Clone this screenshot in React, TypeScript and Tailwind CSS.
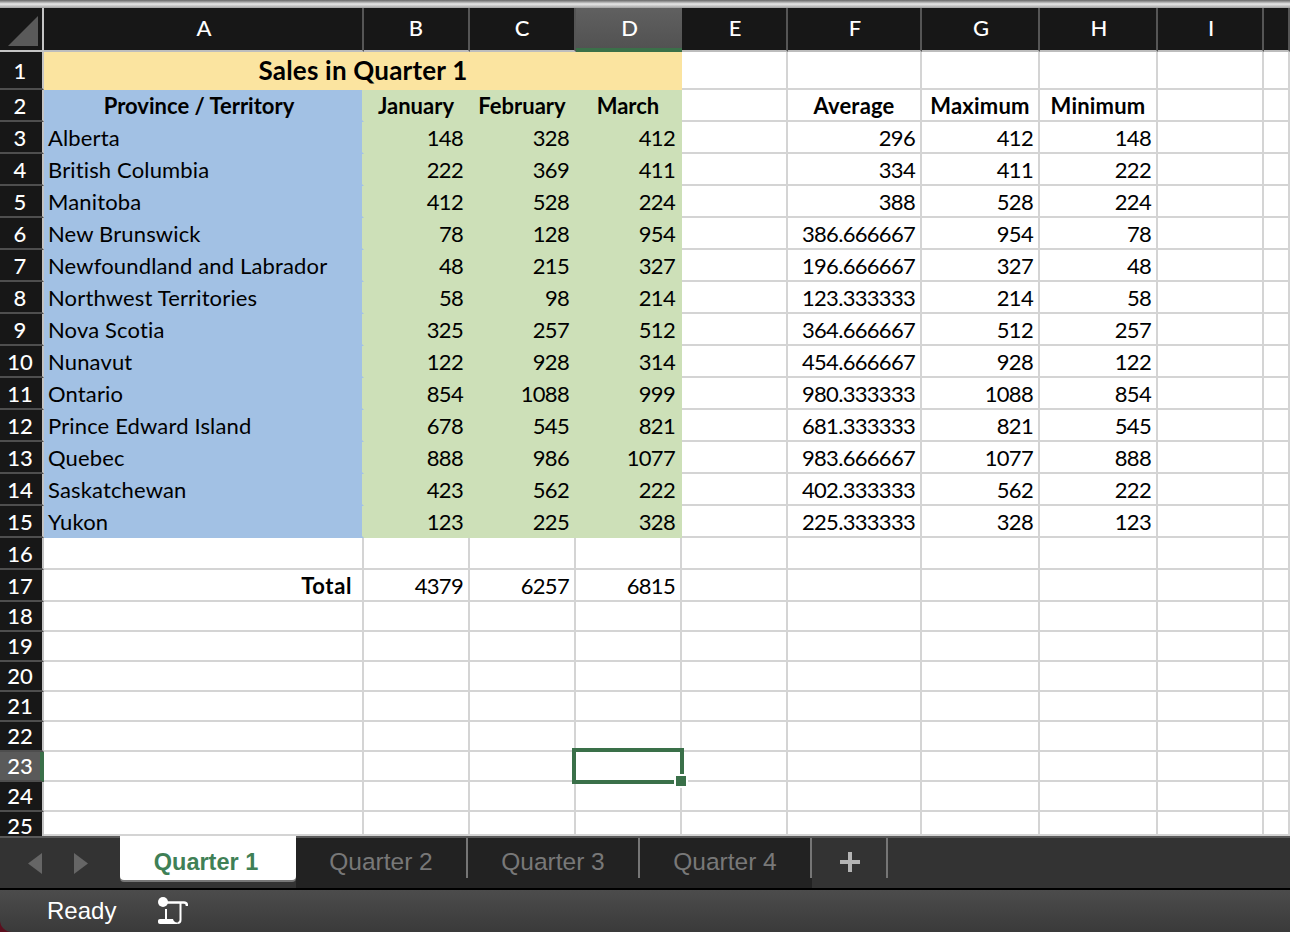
import { Fragment } from "react";

const colHeaders = ["A", "B", "C", "D", "E", "F", "G", "H", "I", ""];

const provinces: [string, number, number, number, string, number, number][] = [
  ["Alberta", 148, 328, 412, "296", 412, 148],
  ["British Columbia", 222, 369, 411, "334", 411, 222],
  ["Manitoba", 412, 528, 224, "388", 528, 224],
  ["New Brunswick", 78, 128, 954, "386.666667", 954, 78],
  ["Newfoundland and Labrador", 48, 215, 327, "196.666667", 327, 48],
  ["Northwest Territories", 58, 98, 214, "123.333333", 214, 58],
  ["Nova Scotia", 325, 257, 512, "364.666667", 512, 257],
  ["Nunavut", 122, 928, 314, "454.666667", 928, 122],
  ["Ontario", 854, 1088, 999, "980.333333", 1088, 854],
  ["Prince Edward Island", 678, 545, 821, "681.333333", 821, 545],
  ["Quebec", 888, 986, 1077, "983.666667", 1077, 888],
  ["Saskatchewan", 423, 562, 222, "402.333333", 562, 222],
  ["Yukon", 123, 225, 328, "225.333333", 328, 123],
];

const base = "flex items-end border-r-2 border-b-2 px-1 text-black";
const plain = `${base} border-[#d4d4d4]`;
const blue = `${base} bg-[#a2c1e4] border-b-[#a2c1e4] border-r-[#cde0b8]`;
const green = `${base} bg-[#cde0b8] border-[#cde0b8]`;

function RowHead({ n }: { n: number }) {
  const active = n === 23;
  return (
    <div
      className={`flex justify-center pr-[2px] font-medium text-white ${
        active ? "border-r-4 border-r-[#3a7049] bg-[#5a5a5a] pl-[2px]" : "border-r-2 border-r-[#c4c4c4] bg-[#171717]"
      } ${n === 25 ? "items-start pt-[4px] text-[22px] leading-[20px]" : "items-end border-b-2 border-b-[#4e4e4e] text-[22px] leading-[28px]"} ${
        n === 1 ? "pb-[3px]" : ""
      }`}
    >
      {n}
    </div>
  );
}

function Empty({ n = 9 }: { n?: number }) {
  return (
    <>
      {Array.from({ length: n }).map((_, i) => (
        <div key={i} className={plain} />
      ))}
    </>
  );
}

function Num({ v, variant = plain }: { v: string | number; variant?: string }) {
  return <div className={`${variant} justify-end pr-[5px] tracking-[-0.7px]`}>{v}</div>;
}

function MacroIcon() {
  return (
    <svg width="30" height="28" viewBox="0 0 30 28" fill="none" className="shrink-0">
      <circle cx="5" cy="5" r="5" fill="#fff" />
      <path d="M9 5.5H26C28 5.5 29 7 29 9" stroke="#fff" strokeWidth="2.5" />
      <path d="M22.5 5.5V23C22.5 25 21.5 26 19.5 26" stroke="#fff" strokeWidth="2" />
      <path d="M8 12V22" stroke="#fff" strokeWidth="2" />
      <path d="M0 24C0 22.8 .8 22 2 22H15C15.5 24 17 25.5 19 25.5L20 27H2C.8 27 0 26.2 0 25Z" fill="#fff" />
    </svg>
  );
}

function Tab({ label }: { label: string }) {
  return (
    <div className="flex h-[40px] w-[172px] items-center justify-center border-r-2 border-[#767676] pt-[8px] text-[#787878]">
      {label}
    </div>
  );
}

export default function App() {
  return (
    <div className="flex h-screen w-full flex-col overflow-hidden bg-[#5b0f1e] font-['Lato','Liberation_Sans',sans-serif] text-[22px] leading-[28px]">
      <div className="h-2 shrink-0 bg-gradient-to-b from-[#666666] via-[#e8e8e8] to-[#a0a0a0]" />

      <div className="grid h-[828px] shrink-0 grid-cols-[44px_320px_106px_106px_106px_106px_134px_118px_118px_106px_26px] grid-rows-[44px_38px_repeat(16,32px)_repeat(7,30px)_24px] overflow-hidden bg-white">
        {/* column headers */}
        <div className="relative border-r-2 border-b-2 border-[#c4c4c4] bg-[#171717]">
          <svg width="30" height="30" viewBox="0 0 30 30" className="absolute top-2 left-2">
            <path d="M0 30L30 0V30Z" fill="#5a5a5a" />
          </svg>
        </div>
        {colHeaders.map((c) => (
          <div
            key={c || "J"}
            className={`flex items-center justify-center text-[22px] font-medium text-white ${
              c === "D"
                ? "border-b-4 border-b-[#3a7049] bg-gradient-to-b from-[#606060] to-[#525252] pl-[1px]"
                : "border-r-2 border-b-2 border-r-[#555] border-b-[#bdbdbd] bg-[#171717] pb-[2px]"
            } ${c === "B" || c === "C" || c === "D" ? "" : "pl-[2px]"}`}
          >
            {c}
          </div>
        ))}

        {/* row 1 */}
        <RowHead n={1} />
        <div className="col-span-4 flex items-start justify-center bg-[#fbe4a0] pt-[4px] text-[26px] font-bold tracking-[0.2px] text-black">
          Sales in Quarter 1
        </div>
        <Empty n={6} />

        {/* row 2 */}
        <RowHead n={2} />
        <div className={`${blue} justify-center pr-[12px] font-bold`}>Province / Territory</div>
        {["January", "February", "March"].map((m) => (
          <div key={m} className={`${green} justify-center font-bold`}>
            {m}
          </div>
        ))}
        <div className={plain} />
        {["Average", "Maximum", "Minimum"].map((m) => (
          <div key={m} className={`${plain} justify-center font-bold tracking-[0.2px]`}>
            {m}
          </div>
        ))}
        <Empty n={2} />

        {/* data rows */}
        {provinces.map((p, i) => (
          <Fragment key={p[0]}>
            <RowHead n={i + 3} />
            <div className={`${blue} tracking-[0.15px]`}>{p[0]}</div>
            <Num v={p[1]} variant={green} />
            <Num v={p[2]} variant={green} />
            <Num v={p[3]} variant={green} />
            <div className={plain} />
            <Num v={p[4]} />
            <Num v={p[5]} />
            <Num v={p[6]} />
            <Empty n={2} />
          </Fragment>
        ))}

        <RowHead n={16} />
        <Empty n={10} />

        <RowHead n={17} />
        <div className={`${plain} justify-end pr-[10px] font-bold tracking-[0.6px]`}>Total</div>
        <Num v={4379} />
        <Num v={6257} />
        <Num v={6815} />
        <Empty n={6} />

        {[18, 19, 20, 21, 22, 23, 24, 25].map((n) => (
          <Fragment key={n}>
            <RowHead n={n} />
            <div className={plain} />
            <div className={plain} />
            <div className={plain} />
            <div className={`${plain} relative`}>
              {n === 23 && (
                <div className="absolute -top-[4px] -left-[4px] z-10 h-[36px] w-[112px] border-4 border-[#3a7049]">
                  <div className="absolute -right-[8px] -bottom-[8px] h-[14px] w-[14px] border-2 border-white bg-[#3a7049]" />
                </div>
              )}
            </div>
            <Empty n={6} />
          </Fragment>
        ))}
      </div>

      {/* sheet tabs */}
      <div className="flex h-[52px] shrink-0 items-start border-t-2 border-[#5a5a5a] bg-[#333333] font-['Liberation_Sans',sans-serif] text-[24.5px] leading-none">
        <div className="flex h-[50px] w-[120px] shrink-0 items-start gap-[32px] pt-[15px] pl-[28px]">
          <svg width="14" height="21" viewBox="0 0 14 21">
            <path d="M14 0V21L0 10.5Z" fill="#666" />
          </svg>
          <svg width="14" height="21" viewBox="0 0 14 21">
            <path d="M0 0V21L14 10.5Z" fill="#666" />
          </svg>
        </div>
        <div className="-mt-[2px] flex h-[44px] w-[176px] items-center justify-center rounded-b-[4px] bg-white pt-[10px] pr-[4px] text-[23.5px] font-bold text-[#3f8056] shadow-[0_2px_0_#777]">
          Quarter 1
        </div>
        <div className="flex h-[50px] bg-[#222222]">
          <Tab label="Quarter 2" />
          <Tab label="Quarter 3" />
          <Tab label="Quarter 4" />
        </div>
        <div className="flex h-[40px] w-[76px] items-center justify-center border-r-2 border-[#767676] pt-[8px] pl-[2px] text-[#b4b4b4]">
          <svg width="20" height="20" viewBox="0 0 20 20">
            <path d="M8 0H12V8H20V12H12V20H8V12H0V8H8Z" fill="currentColor" />
          </svg>
        </div>
      </div>

      {/* status bar */}
      <div className="flex flex-1 items-center gap-[42px] rounded-bl-[12px] border-t-2 border-black bg-gradient-to-b from-[#4c4c4c] to-[#3a3a3a] pl-[47px] font-['Liberation_Sans',sans-serif] text-[24px] leading-none text-white">
        <span>Ready</span>
        <MacroIcon />
      </div>
    </div>
  );
}
